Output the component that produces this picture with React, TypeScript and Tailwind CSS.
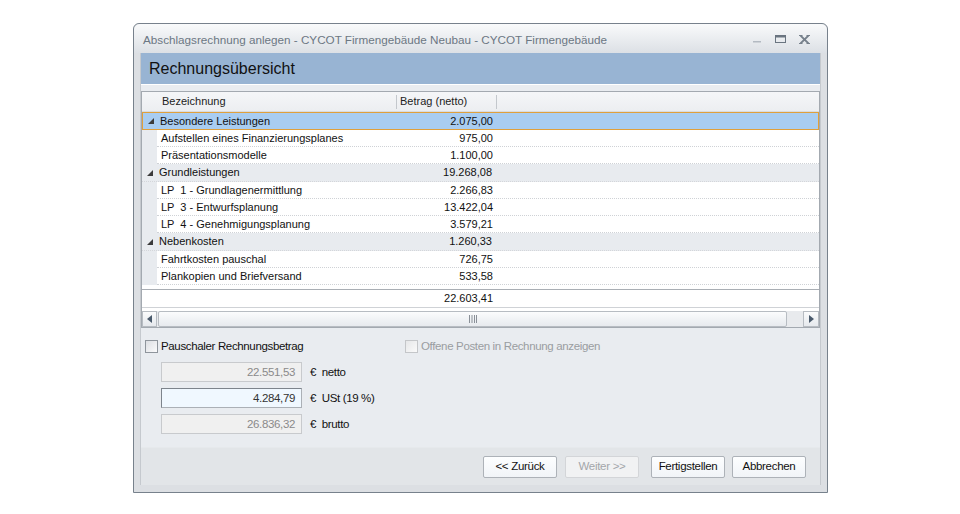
const groups = [
  {
    name: 'Besondere Leistungen',
    amount: '2.075,00',
    selected: true,
    items: [
      ['Aufstellen eines Finanzierungsplanes', '975,00'],
      ['Präsentationsmodelle', '1.100,00'],
    ],
  },
  {
    name: 'Grundleistungen',
    amount: '19.268,08',
    selected: false,
    items: [
      ['LP  1 - Grundlagenermittlung', '2.266,83'],
      ['LP  3 - Entwurfsplanung', '13.422,04'],
      ['LP  4 - Genehmigungsplanung', '3.579,21'],
    ],
  },
  {
    name: 'Nebenkosten',
    amount: '1.260,33',
    selected: false,
    items: [
      ['Fahrtkosten pauschal', '726,75'],
      ['Plankopien und Briefversand', '533,58'],
    ],
  },
];

function Expander() {
  return (
    <svg width="6" height="6" viewBox="0 0 6 6" className="block">
      <polygon points="6,0 6,6 0,6" fill="#3b3b3b" />
    </svg>
  );
}

function GroupRow({ name, amount, selected }: { name: string; amount: string; selected: boolean }) {
  return (
    <div
      className={
        selected
          ? 'flex h-[18px] items-center border border-[#e0a03c] bg-[#a9cdf1]'
          : 'flex h-[18px] items-center border-b border-dotted border-[#d4d6da] bg-[#e8ebef]'
      }
    >
      <div className="flex w-[14px] justify-end pr-[3px]">
        <Expander />
      </div>
      <div className="w-[239px] pl-[3px]">{name}</div>
      <div className="w-[100px] pr-[3px] text-right">{amount}</div>
    </div>
  );
}

function ItemRow({ name, amount }: { name: string; amount: string }) {
  return (
    <div className="flex h-[17px]">
      <div className="w-[15px] bg-[#e8ebef]" />
      <div className="flex flex-1 items-center border-b border-dotted border-[#cfd2d6]">
        <div className="w-[239px] whitespace-pre pl-[4px]">{name}</div>
        <div className="w-[100px] pr-[3px] text-right">{amount}</div>
      </div>
    </div>
  );
}

function CheckBox({ disabled }: { disabled?: boolean }) {
  return (
    <div
      className={
        disabled
          ? 'h-[13px] w-[13px] border border-[#c4c6c9] bg-gradient-to-br from-[#e6e7e9] to-[#fafafa]'
          : 'h-[13px] w-[13px] border border-[#8f959c] bg-gradient-to-br from-[#dcdee2] to-[#fbfbfc]'
      }
    />
  );
}

function Amount({ value, label, active }: { value: string; label: string; active?: boolean }) {
  return (
    <div className="flex items-center">
      <div
        className={
          active
            ? 'flex h-[20px] w-[141px] items-center justify-end border border-[#abb0b6] border-t-[#7d848c] border-l-[#7d848c] bg-[#f0f8ff] pr-[6px] text-[#333]'
            : 'flex h-[20px] w-[141px] items-center justify-end border border-[#c8cacd] bg-[#f0f0f0] pr-[6px] text-[#8a8a8a]'
        }
      >
        {value}
      </div>
      <div className="ml-[8px] whitespace-pre text-[#111]">{'€  ' + label}</div>
    </div>
  );
}

function Button({ children, disabled }: { children: string; disabled?: boolean }) {
  return (
    <div
      className={
        disabled
          ? 'flex h-[22px] w-[74px] items-center justify-center rounded-[2px] border border-[#d3d5d8] bg-[#f1f2f3] text-[#a3a6aa]'
          : 'flex h-[22px] w-[74px] items-center justify-center rounded-[2px] border border-[#adb2b8] bg-gradient-to-b from-[#fdfeff] to-[#f1f4f8] text-[#111]'
      }
    >
      {children}
    </div>
  );
}

export default function App() {
  return (
    <div className="h-[514px] w-[960px] bg-white pl-[133px] pt-[23px] font-['Liberation_Sans',Arial,sans-serif]">
      <div className="flex h-[470px] w-[695px] flex-col rounded-t-[6px] border border-[#77818c] bg-[#dcdfe3]">
        {/* Title bar */}
        <div className="flex h-[29px] items-center rounded-t-[6px] bg-gradient-to-b from-[#f9fafb] to-[#dce0e5] pl-[9px] pr-[17px] pt-[2px]">
          <div className="flex-1 text-[11.7px] text-[#6c7783]">
            Abschlagsrechnung anlegen - CYCOT Firmengebäude Neubau - CYCOT Firmengebäude
          </div>
          <div className="flex items-center gap-[13px]">
            <svg width="10" height="10" viewBox="0 0 10 10">
              <rect x="1" y="6" width="8" height="1.5" fill="#b3bac2" />
            </svg>
            <svg width="11" height="9" viewBox="0 0 11 9">
              <rect x="0.5" y="0.5" width="10" height="7" fill="none" stroke="#6a7580" />
              <rect x="0.5" y="0.5" width="10" height="2" fill="#6a7580" />
            </svg>
            <svg width="11" height="9" viewBox="0 0 11 9">
              <path d="M1.5 0.5 L9.5 8.5 M9.5 0.5 L1.5 8.5" stroke="#76808b" strokeWidth="1.8" />
              <path d="M0 0.5 H3.5 M7.5 0.5 H11 M0 8.5 H3.5 M7.5 8.5 H11" stroke="#76808b" strokeWidth="1" />
            </svg>
          </div>
        </div>

        {/* Content */}
        <div className="mx-[6px] flex flex-1 flex-col border-l border-r border-[#c5c9ce] bg-[#e9ecf0]">
          <div className="flex h-[32px] items-center border-b border-white bg-[#98b4d3] pl-[8px] text-[16px] text-[#111]">
            Rechnungsübersicht
          </div>

          {/* Grid */}
          <div className="mt-[6px] flex h-[237px] flex-col border border-[#a3a9b0] bg-white text-[11px] text-[#111]">
            <div className="flex h-[20px] items-center border-b border-[#d9dce0] bg-gradient-to-b from-[#f5f6f8] to-[#eceef1] text-[#222]">
              <div className="w-[20px]" />
              <div className="w-[234px]">Bezeichnung</div>
              <div className="h-[14px] w-px bg-[#c3c7cc]" />
              <div className="w-[99px] pl-[3px]">Betrag (netto)</div>
              <div className="h-[14px] w-px bg-[#c3c7cc]" />
            </div>
            <div className="flex flex-col">
              {groups.map((g) => (
                <div key={g.name}>
                  <GroupRow name={g.name} amount={g.amount} selected={g.selected} />
                  {g.items.map(([n, a]) => (
                    <ItemRow key={n} name={n} amount={a} />
                  ))}
                </div>
              ))}
            </div>
            <div className="flex-1" />
            <div className="flex h-[19px] items-center border-t border-[#a9aeb4] border-b border-b-[#cfd2d6] border-b-dotted">
              <div className="w-[15px]" />
              <div className="w-[239px]" />
              <div className="w-[100px] pr-[3px] text-right">22.603,41</div>
            </div>
            {/* Horizontal scrollbar */}
            <div className="mt-[3px] flex h-[16px] items-stretch bg-[#e8eaed]">
              <div className="flex w-[15px] items-center justify-center border border-[#b7bcc2] bg-gradient-to-b from-[#fafbfc] to-[#e6e9ed]">
                <svg width="5" height="8" viewBox="0 0 5 8">
                  <polygon points="5,0 5,8 0,4" fill="#4a5a6c" />
                </svg>
              </div>
              <div className="ml-px flex w-[629px] items-center justify-center rounded-[2px] border border-[#b7bcc2] bg-gradient-to-b from-[#fbfcfd] to-[#e7eaee]">
                <svg width="8" height="8" viewBox="0 0 8 8">
                  <path d="M0.5 0 V8 M3 0 V8 M5.5 0 V8 M7.5 0 V8" stroke="#8a9098" strokeWidth="1" />
                </svg>
              </div>
              <div className="flex-1" />
              <div className="flex w-[16px] items-center justify-center border border-[#b7bcc2] bg-gradient-to-b from-[#fafbfc] to-[#e6e9ed]">
                <svg width="5" height="8" viewBox="0 0 5 8">
                  <polygon points="0,0 0,8 5,4" fill="#4a5a6c" />
                </svg>
              </div>
            </div>
          </div>

          {/* Options */}
          <div className="flex flex-col pl-[4px] pt-[10px] text-[11.5px] tracking-[-0.35px]">
            <div className="flex items-center">
              <div className="flex w-[260px] items-center gap-[3px]">
                <CheckBox />
                <span className="text-[#111]">Pauschaler Rechnungsbetrag</span>
              </div>
              <div className="flex items-center gap-[3px]">
                <CheckBox disabled />
                <span className="text-[#9a9da1]">Offene Posten in Rechnung anzeigen</span>
              </div>
            </div>
            <div className="mt-[7px] flex flex-col gap-[6px] pl-[16px]">
              <Amount value="22.551,53" label="netto" />
              <Amount value="4.284,79" label="USt (19 %)" active />
              <Amount value="26.836,32" label="brutto" />
            </div>
          </div>

          <div className="flex-1" />

          {/* Buttons */}
          <div className="flex h-[38px] items-center justify-end border-t border-[#e6e9ec] bg-[#e2e5e8] pr-[14px] text-[11.5px] tracking-[-0.3px]">
            <Button>{'<< Zurück'}</Button>
            <div className="w-[8px]" />
            <Button disabled>{'Weiter >>'}</Button>
            <div className="w-[12px]" />
            <Button>Fertigstellen</Button>
            <div className="w-[7px]" />
            <Button>Abbrechen</Button>
          </div>
        </div>
        <div className="h-[7px]" />
      </div>
    </div>
  );
}
